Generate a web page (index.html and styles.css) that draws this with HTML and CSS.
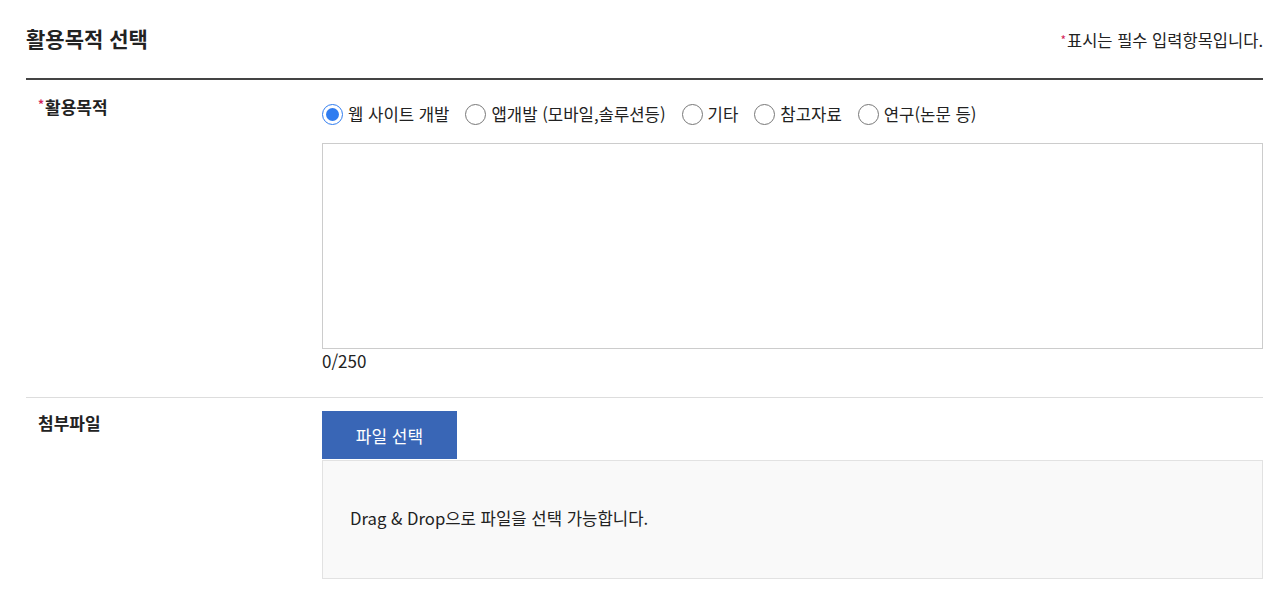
FILE: index.html
```html
<!DOCTYPE html>
<html lang="ko">
<head>
<meta charset="utf-8">
<title>활용목적 선택</title>
<link rel="stylesheet" href="styles.css">
</head>
<body>
<div class="wrap">
  <div class="head">
    <h2 class="title">활용목적 선택</h2>
    <p class="note"><span class="req">*</span>표시는 필수 입력항목입니다.</p>
  </div>
  <div class="row row-purpose">
    <div class="label"><span class="req">*</span>활용목적</div>
    <div class="field">
      <div class="radios">
        <label class="radio"><input type="radio" name="p" checked><span class="dot"></span>웹 사이트 개발</label>
        <label class="radio"><input type="radio" name="p"><span class="dot"></span>앱개발 (모바일,솔루션등)</label>
        <label class="radio"><input type="radio" name="p"><span class="dot"></span>기타</label>
        <label class="radio"><input type="radio" name="p"><span class="dot"></span>참고자료</label>
        <label class="radio"><input type="radio" name="p"><span class="dot"></span>연구(논문 등)</label>
      </div>
      <textarea class="text" maxlength="250"></textarea>
      <div class="count">0/250</div>
    </div>
  </div>
  <div class="row row-file">
    <div class="label">첨부파일</div>
    <div class="field">
      <button class="btn" type="button">파일 선택</button>
      <div class="drop">Drag &amp; Drop으로 파일을 선택 가능합니다.</div>
    </div>
  </div>
</div>
</body>
</html>
```

FILE: styles.css
```css
* { box-sizing: border-box; }
html, body { margin: 0; padding: 0; background: #fff; }
body {
  font-family: "Noto Sans CJK KR", "Noto Sans", sans-serif;
  color: #222;
  font-size: 17px;
}
.wrap { padding: 0 17px 0 26px; }
.head {
  display: flex;
  justify-content: space-between;
  align-items: flex-end;
  padding: 22px 0 24px;
  border-bottom: 2px solid #444;
}
.title {
  margin: 0;
  font-size: 21px;
  font-weight: 700;
  line-height: 32px;
  color: #222;
}
.note {
  margin: 0;
  font-size: 16.5px;
  line-height: 28px;
  color: #222;
}
.req { color: #d4245a; font-size: 12px; vertical-align: top; margin-right: 1px; }
.row { display: flex; }
.row + .row { border-top: 1px solid #ddd; }
.label {
  width: 296px;
  flex: none;
  padding-left: 12px;
  font-weight: 700;
  line-height: 22px;
  color: #222;
}
.row-purpose { padding: 24px 0 25px; }
.row-purpose .label { margin-top: -8px; }
.row-purpose .label .req { line-height: 16px; }
.field { flex: 1; min-width: 0; }
.radios { display: flex; align-items: center; gap: 16px; height: 20px; font-size: 16.7px; }
.radio { display: flex; align-items: center; gap: 5px; line-height: 20px; cursor: pointer; white-space: nowrap; }
.radio input { display: none; }
.dot {
  width: 21px; height: 21px; border-radius: 50%;
  border: 1.5px solid #777;
  background: #fff;
  flex: none;
  position: relative;
}
.radio input:checked + .dot { border-color: #2f7cf0; }
.radio input:checked + .dot::after {
  content: ""; position: absolute; inset: 3px; border-radius: 50%; background: #2f7cf0;
}
.text {
  display: block;
  width: 100%;
  height: 206px;
  margin-top: 19px;
  border: 1px solid #ccc;
  resize: none;
  font: inherit;
  padding: 10px;
}
.count { line-height: 22px; margin-top: 1px; color: #222; }
.row-file { padding: 13px 0 0; }
.row-file .label { padding-top: 1px; }
.btn {
  display: block;
  width: 135px;
  height: 48px;
  border: 0;
  background: #3966b6;
  color: #fff;
  font: inherit;
  font-size: 17px;
  cursor: pointer;
}
.drop {
  margin-top: 1px;
  height: 119px;
  border: 1px solid #e2e2e2;
  background: #f9f9f9;
  padding: 0 0 3px 27px;
  display: flex;
  align-items: center;
  color: #222;
  font-size: 16.7px;
}
```
